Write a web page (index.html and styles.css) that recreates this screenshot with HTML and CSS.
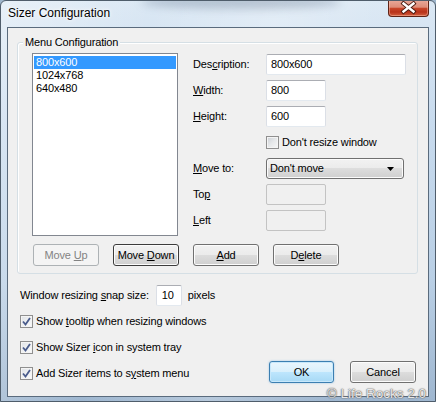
FILE: index.html
```html
<!DOCTYPE html>
<html>
<head>
<meta charset="utf-8">
<link rel="stylesheet" href="styles.css">
</head>
<body>
<div class="window">
  <div class="glass-smudge"></div>
  <div class="titlebar">
    <span class="title">Sizer Configuration</span>
    <div class="close">
      <svg width="41" height="17" viewBox="0 0 41 17">
        <path d="M15.5 4.5 L25.5 12.5 M25.5 4.5 L15.5 12.5" stroke="#4a1a10" stroke-width="4.2" stroke-linecap="square" fill="none"/>
        <path d="M15.5 4.5 L25.5 12.5 M25.5 4.5 L15.5 12.5" stroke="#ffffff" stroke-width="2.4" stroke-linecap="square" fill="none"/>
      </svg>
    </div>
  </div>
  <div class="client">
    <div class="group">
      <div class="legend">Menu Configuration</div>
      <div class="group-top">
        <div class="listbox">
          <div class="item selected">800x600</div>
          <div class="item">1024x768</div>
          <div class="item">640x480</div>
        </div>
        <div class="form">
          <div class="label">Des<u>c</u>ription:</div>
          <div class="textbox wide">800x600</div>
          <div class="label"><u>W</u>idth:</div>
          <div class="textbox short">800</div>
          <div class="label"><u>H</u>eight:</div>
          <div class="textbox short">600</div>
          <div class="label"></div>
          <div class="check-row">
            <span class="checkbox"></span>
            <span>Don't resize window</span>
          </div>
          <div class="label"><u>M</u>ove to:</div>
          <div class="combo">
            <span>Don't move</span>
            <svg class="arrow" width="7" height="4" viewBox="0 0 7 4"><path d="M0 0 H7 L3.5 4 Z" fill="#000"/></svg>
          </div>
          <div class="label">To<u>p</u></div>
          <div class="textbox short disabled"></div>
          <div class="label"><u>L</u>eft</div>
          <div class="textbox short disabled"></div>
        </div>
      </div>
      <div class="group-buttons">
        <div class="btn disabled"><span>Move <u>U</u>p</span></div>
        <div class="btn focused"><span>Move <u>D</u>own</span></div>
        <div class="btn"><span><u>A</u>dd</span></div>
        <div class="btn"><span>D<u>e</u>lete</span></div>
      </div>
    </div>
    <div class="bottom">
      <div class="options">
        <div class="snap-row">
          <span>Window resizing <u>s</u>nap size:</span>
          <div class="textbox snap">10</div>
          <span>pixels</span>
        </div>
        <div class="check-row">
          <span class="checkbox checked"><svg width="9" height="9" viewBox="0 0 9 9"><path d="M1 4.5 L3.5 7.5 L8 1" stroke="#4a5c8c" stroke-width="1.8" fill="none"/></svg></span>
          <span>Show <u>t</u>ooltip when resizing windows</span>
        </div>
        <div class="check-row">
          <span class="checkbox checked"><svg width="9" height="9" viewBox="0 0 9 9"><path d="M1 4.5 L3.5 7.5 L8 1" stroke="#4a5c8c" stroke-width="1.8" fill="none"/></svg></span>
          <span>Show Sizer <u>i</u>con in system tray</span>
        </div>
        <div class="check-row">
          <span class="checkbox checked"><svg width="9" height="9" viewBox="0 0 9 9"><path d="M1 4.5 L3.5 7.5 L8 1" stroke="#4a5c8c" stroke-width="1.8" fill="none"/></svg></span>
          <span>Add Sizer items to s<u>y</u>stem menu</span>
        </div>
      </div>
      <div class="dialog-buttons">
        <div class="btn default ok"><span>OK</span></div>
        <div class="btn cancel"><span>Cancel</span></div>
      </div>
    </div>
  </div>
  <div class="watermark">© Life Rocks 2.0</div>
</div>
</body>
</html>
```

FILE: styles.css
```css
* { box-sizing: border-box; }
html, body { margin: 0; padding: 0; }
body {
  width: 436px;
  height: 402px;
  overflow: hidden;
  background: #9fb6cc;
  font-family: "Segoe UI", "Liberation Sans", Arial, sans-serif;
  font-size: 11px;
  letter-spacing: -0.15px;
  color: #000;
}
u { text-decoration: underline; text-underline-offset: 1px; }

.window {
  position: relative;
  width: 436px;
  height: 402px;
  border: 1px solid #4f5d6b;
  border-radius: 6px 6px 0 0;
  background:
    linear-gradient(100deg, rgba(255,255,255,0.35) 0%, rgba(255,255,255,0) 30%, rgba(255,255,255,0.25) 55%, rgba(255,255,255,0) 80%),
    linear-gradient(to bottom, #dbe8f4 0%, #c8dbee 30%, #b9cfe5 70%, #9fb7d0 100%);
  overflow: hidden;
}
.glass-smudge {
  position: absolute;
  left: 140px;
  top: -6px;
  width: 200px;
  height: 14px;
  border-radius: 50%;
  background: rgba(70, 90, 120, 0.28);
  filter: blur(4px);
}

.titlebar {
  position: relative;
  height: 26px;
  display: flex;
  justify-content: space-between;
  align-items: flex-start;
  padding-left: 7px;
}
.title {
  margin-top: 5px;
  font-size: 12px;
  line-height: 15px;
  letter-spacing: 0;
  color: #000;
  text-shadow: 0 0 6px #fff, 0 0 3px #fff;
}
.close {
  width: 41px;
  height: 17px;
  margin-top: -1px;
  margin-right: 6px;
  border: 1px solid #5e2316;
  border-top: none;
  border-radius: 0 0 4px 4px;
  background: linear-gradient(to bottom, #e9aa9b 0%, #de8c78 45%, #c8462a 52%, #b8321a 75%, #d2603f 100%);
  box-shadow: inset 0 0 0 1px rgba(255,200,180,0.45);
  overflow: hidden;
}
.close svg { display: block; margin: -1px 0 0 -1px; }

.client {
  position: relative;
  margin: 0 6px;
  height: 370px;
  border: 1px solid #5a6b7d;
  background: #f0f0f0;
  display: flex;
  flex-direction: column;
}

.group {
  margin: 14px 10px 0 9px;
  border: 1px solid #d5dfe5;
  border-radius: 3px;
  padding-bottom: 7px;
  box-shadow: inset 1px 1px 0 #fff;
}
.legend {
  width: max-content;
  margin: -8px 0 0 5px;
  padding: 0 2px;
  background: #f0f0f0;
  line-height: 15px;
}
.group-top {
  display: flex;
  margin-top: 3px;
  padding-left: 14px;
}
.listbox {
  width: 146px;
  height: 183px;
  border: 1px solid #828790;
  background: #fff;
  padding: 2px 1px;
}
.item {
  height: 13px;
  line-height: 13px;
  padding-left: 2px;
}
.item.selected {
  background: #3399ff;
  color: #fff;
}
.form {
  margin: 1px 0 0 15px;
  display: grid;
  grid-template-columns: 73px auto;
  grid-auto-rows: 21px;
  row-gap: 5px;
  align-items: center;
}
.label { line-height: 15px; }
.textbox {
  height: 21px;
  border: 1px solid #dbdfe6;
  border-top-color: #abadb3;
  border-bottom-color: #e3e9ef;
  border-radius: 2px;
  background: #fff;
  padding-left: 4px;
  line-height: 19px;
}
.textbox.wide { width: 140px; }
.textbox.short { width: 60px; }
.textbox.disabled {
  background: #f0f0f0;
  border-color: #c3c3c3;
}
.textbox.snap {
  width: 26px;
  margin: 0 6px 0 7px;
  padding-left: 5px;
}
.check-row {
  display: flex;
  align-items: center;
  height: 21px;
  gap: 3px;
  line-height: 15px;
}
.checkbox {
  width: 13px;
  height: 13px;
  border: 1px solid #8f8f8f;
  background: linear-gradient(135deg, #cbcfd5 0%, #e6e8ea 50%, #f7f7f7 100%);
  box-shadow: inset 0 0 0 1px #f4f4f4;
  display: flex;
  align-items: center;
  justify-content: center;
  flex: none;
}
.checkbox.checked {
  background: linear-gradient(135deg, #dfe2e6 0%, #eef0f2 50%, #fbfbfb 100%);
}
.checkbox svg { display: block; }
.combo {
  width: 138px;
  height: 21px;
  border: 1px solid #707070;
  border-radius: 3px;
  background: linear-gradient(to bottom, #f2f2f2 0%, #ebebeb 49%, #dddddd 50%, #cfcfcf 100%);
  box-shadow: inset 0 0 0 1px #fbfbfb;
  display: flex;
  align-items: center;
  justify-content: space-between;
  padding: 0 9px 0 3px;
  line-height: 15px;
}
.arrow { display: block; }

.group-buttons {
  display: flex;
  gap: 14px;
  margin-top: 8px;
  padding-left: 15px;
}
.btn {
  width: 66px;
  height: 22px;
  border: 1px solid #707070;
  border-radius: 3px;
  background: linear-gradient(to bottom, #f2f2f2 0%, #ebebeb 49%, #dddddd 50%, #cfcfcf 100%);
  box-shadow: inset 0 0 0 1px #fcfcfc;
  display: flex;
  align-items: center;
  justify-content: center;
  line-height: 15px;
  white-space: nowrap;
}
.btn.disabled {
  border-color: #adb2b5;
  background: #f4f4f4;
  color: #838383;
  box-shadow: none;
}
.btn.focused {
  border-color: #3c3c3c;
}
.btn.default {
  border-color: #3c7fb1;
  background: linear-gradient(to bottom, #eaf6fd 0%, #d9f0fc 49%, #bee6fd 50%, #a7d9f5 100%);
  box-shadow: inset 0 0 0 1px #c8e8fb, 0 0 2px rgba(80,160,220,0.6);
}
.btn.ok { width: 65px; }

.bottom {
  display: flex;
  align-items: flex-end;
  margin-top: 11px;
  padding: 0 12px;
}
.options {
  display: flex;
  flex-direction: column;
  gap: 5px;
}
.snap-row {
  display: flex;
  align-items: center;
  height: 21px;
  line-height: 15px;
}
.dialog-buttons {
  margin-left: auto;
  margin-bottom: 1px;
  display: flex;
  gap: 16px;
}

.watermark {
  position: absolute;
  right: 9px;
  bottom: -1px;
  font-family: "Liberation Sans", Arial, sans-serif;
  font-size: 13.5px;
  letter-spacing: 0;
  line-height: 16px;
  color: rgba(255,255,255,0.85);
  text-shadow: 0 0 1px #6a6a6a, 0 0 1px #6a6a6a, 0 0 2px #888;
  white-space: nowrap;
}
```
